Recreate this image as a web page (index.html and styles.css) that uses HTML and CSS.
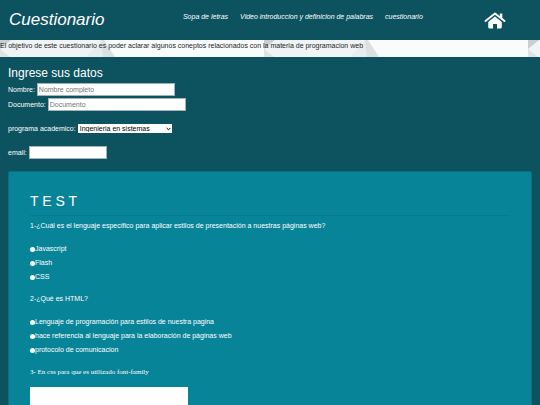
FILE: index.html
```html
<!DOCTYPE html>
<html lang="es">
<head>
  <meta charset="UTF-8">
  <meta name="viewport" content="width=device-width, initial-scale=1.0">
  <title>Cuestionario</title>
  <link rel="stylesheet" href="styles.css">
</head>
<body>
  <header class="header">
    <h1 class="titulo">Cuestionario</h1>
    <nav class="menu">
      <a href="#sopa">Sopa de letras</a>
      <a href="#video">Video introduccion y definicion de palabras</a>
      <a href="#cuestionario">cuestionario</a>
    </nav>
    <a class="inicio" href="#inicio" aria-label="Inicio">
      <svg viewBox="0 0 22 17">
        <path d="M1.5 9 L11 1.5 L20.500 9" fill="none" stroke="#fff" stroke-width="2" stroke-linecap="round" stroke-linejoin="round"/>
        <path d="M15.800 1.500h2.500v6l-2.500-2z" fill="#fff"/>
        <path d="M11 4.500 L17.800 10v5q0 1.500-1.500 1.500H13v-4.500H9v4.500H5.700Q4.200 16.500 4.200 15v-5z" fill="#fff"/>
      </svg>
    </a>
  </header>

  <div class="intro">
    <svg class="fondo" aria-hidden="true">
      <defs>
        <pattern id="papel" width="264" height="17" patternUnits="userSpaceOnUse">
          <rect width="264" height="17" fill="#fafcfc"/>
          <path d="M0 0h101L86 17H0z" fill="#f1f4f5"/>
          <path d="M0 0h11L0 9z" fill="#c9ced2"/>
          <path d="M0 9l10 8H0z" fill="#dfe3e6"/>
          <path d="M101 0L86 17h18z" fill="#e9edee"/>
          <path d="M101 0h3l11 17h-12z" fill="#dbe0e1"/>
        </pattern>
      </defs>
      <rect width="100%" height="100%" fill="url(#papel)"/>
    </svg>
    <p>El objetivo de este cuestionario es poder aclarar algunos coneptos relacionados con la materia de programacion web</p>
  </div>

  <form class="formulario">
    <h2>Ingrese sus datos</h2>
    <div class="campo">
      <label for="nombre">Nombre:</label>
      <input class="largo" type="text" id="nombre" placeholder="Nombre completo">
    </div>
    <div class="campo">
      <label for="documento">Documento:</label>
      <input class="largo" type="text" id="documento" placeholder="Documento">
    </div>
    <div class="campo separado">
      <label for="programa">programa academico:</label>
      <select id="programa">
        <option>Ingenieria en sistemas</option>
      </select>
    </div>
    <div class="campo separado">
      <label for="email">email:</label>
      <input class="corto" type="email" id="email">
    </div>

    <section class="test">
      <h2>T E S T</h2>
      <hr>
      <p>1-¿Cuál es el lenguaje específico para aplicar estilos de presentación a nuestras páginas web?</p>
      <div class="opciones">
        <label><input type="radio" name="p1">Javascript</label>
        <label><input type="radio" name="p1">Flash</label>
        <label><input type="radio" name="p1">CSS</label>
      </div>
      <p>2-¿Qué es HTML?</p>
      <div class="opciones">
        <label><input type="radio" name="p2">Lenguaje de programación para estilos de nuestra pagina</label>
        <label><input type="radio" name="p2">hace referencia al lenguaje para la elaboración de páginas web</label>
        <label><input type="radio" name="p2">protocolo de comunicacion</label>
      </div>
      <label class="pregunta" for="p3">3- En css para que es utilizado font-family</label>
      <textarea id="p3"></textarea>
    </section>
  </form>
</body>
</html>
```

FILE: styles.css
```css
* {
  box-sizing: border-box;
}

body {
  margin: 0;
  background-color: #0c535f;
  color: white;
  font-family: "Liberation Sans", Arial, sans-serif;
  font-size: 7px;
  line-height: 8px;
}

h1, h2, p {
  margin: 0;
  font-weight: normal;
}

.header {
  display: flex;
  align-items: center;
  height: 40px;
  padding: 0 34px 0 9px;
}

.titulo {
  width: 35%;
  font-size: 17px;
  line-height: 20px;
  font-style: italic;
}

.menu {
  display: flex;
  gap: 12px;
  padding-bottom: 7px;
}

.menu a {
  color: white;
  font-style: italic;
  text-decoration: none;
}

.inicio {
  margin-left: auto;
}

.inicio svg {
  width: 22px;
  height: 17px;
  vertical-align: middle;
}

.intro {
  position: relative;
  padding: 2px 0 7px;
  color: #212529;
}

.fondo {
  position: absolute;
  top: 0;
  left: 0;
  width: 100%;
  height: 100%;
}

.intro p {
  position: relative;
}

.formulario {
  padding: 9px 8px 0;
  background-color: #0c535f;
}

.formulario h2 {
  font-size: 12px;
  line-height: 14px;
}

.campo {
  display: flex;
  align-items: center;
  gap: 2px;
  margin-top: 2px;
}

.formulario h2 + .campo {
  margin-top: 3px;
}

.separado {
  margin-top: 13px;
}

input, select, textarea {
  border: 0;
  border-radius: 0;
  background-color: white;
  font-family: inherit;
  font-size: 7px;
}

.campo input {
  height: 13px;
  padding: 1px;
  border: 1px solid #9fb4b8;
}

.campo input::placeholder {
  color: #757575;
}

.campo .largo {
  width: 138px;
}

.campo .corto {
  width: 78px;
}

select {
  width: 94px;
  height: 9px;
  padding: 0 2px;
  color: black;
  appearance: none;
  background-image: url("data:image/svg+xml,%3Csvg xmlns='http://www.w3.org/2000/svg' viewBox='0 0 5 4'%3E%3Cpath d='M.7 1l1.800 1.800L4.300 1' fill='none' stroke='%23000' stroke-width='1'/%3E%3C/svg%3E");
  background-repeat: no-repeat;
  background-position: right 1px center;
  background-size: 5px 4px;
}

.test {
  margin-top: 12px;
  padding: 21px;
  border: 1px solid #0b6f80;
  border-radius: 2px;
  background-color: #088499;
}

.test h2 {
  font-size: 14px;
  line-height: 17px;
}

.test hr {
  margin: 5px 0 6px;
  border: 0;
  border-top: 1px solid #087a8c;
}

.opciones {
  display: flex;
  flex-direction: column;
  align-items: flex-start;
  gap: 6px;
  margin: 15px 0 14px;
}

.opciones label {
  display: flex;
  align-items: center;
}

.opciones input {
  width: 5px;
  height: 5px;
  margin: 0;
  border-radius: 50%;
  appearance: none;
}

.pregunta {
  display: block;
  font-family: Georgia, "Liberation Serif", serif;
}

.test textarea {
  display: block;
  width: 158px;
  height: 50px;
  margin-top: 11px;
  resize: none;
}
```
